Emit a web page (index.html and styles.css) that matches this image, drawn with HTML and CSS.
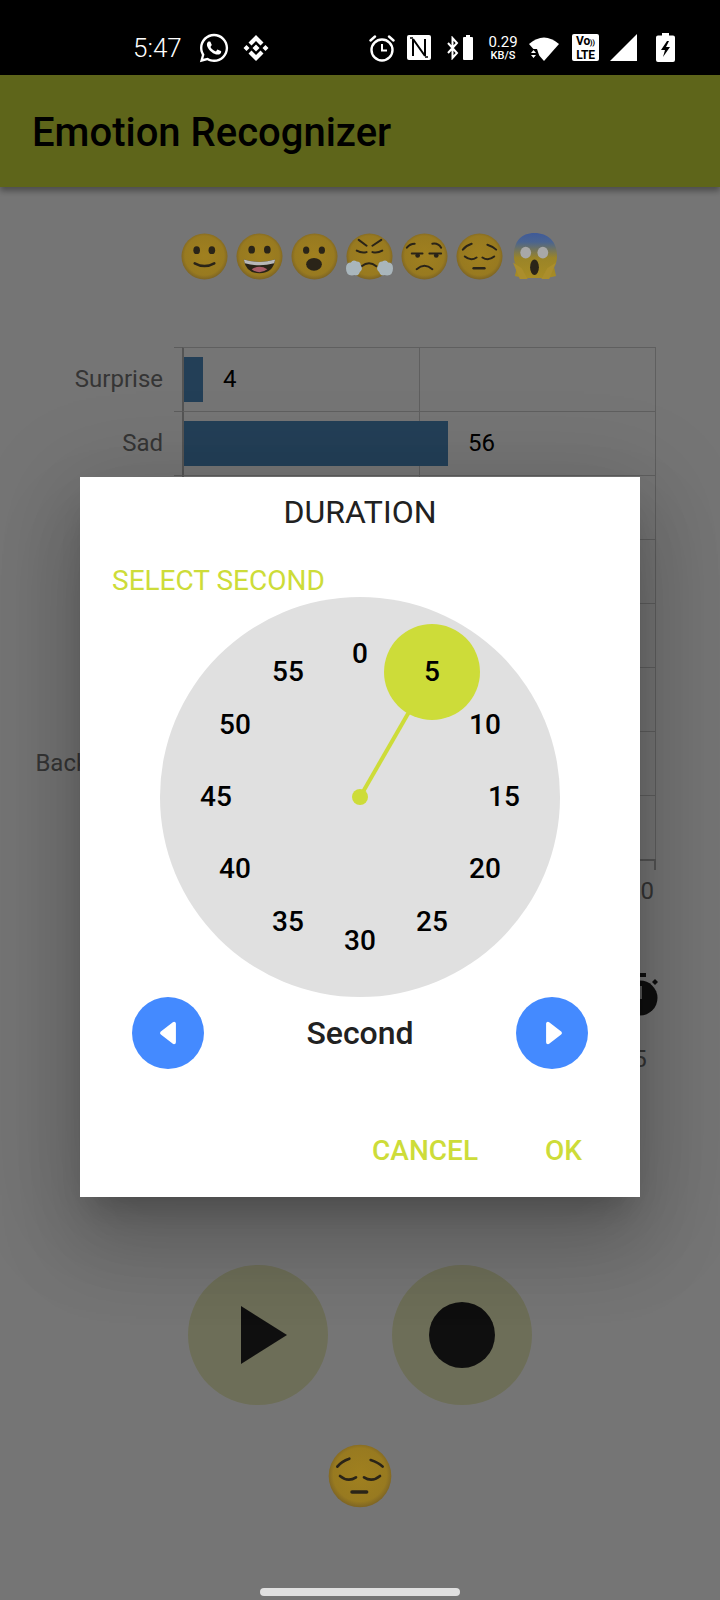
FILE: index.html
```html
<!DOCTYPE html>
<html lang="en">
<head>
<meta charset="utf-8">
<title>Emotion Recognizer</title>
<link rel="stylesheet" href="styles.css">
</head>
<body>
<svg class="defs" width="0" height="0" aria-hidden="true">
  <defs>
    <radialGradient id="skin" cx="50%" cy="48%" r="52%">
      <stop offset="0" stop-color="#a0801f"/>
      <stop offset="0.82" stop-color="#987a20"/>
      <stop offset="1" stop-color="#7d6424"/>
    </radialGradient>
    <linearGradient id="scared" x1="0" y1="0" x2="0" y2="1">
      <stop offset="0" stop-color="#3f5a98"/>
      <stop offset="0.2" stop-color="#4a6490"/>
      <stop offset="0.55" stop-color="#9a8428"/>
      <stop offset="1" stop-color="#a88c24"/>
    </linearGradient>
    <symbol id="e-smile" viewBox="0 0 48 48">
      <circle cx="24" cy="24" r="23.500" fill="url(#skin)"/>
      <ellipse cx="16" cy="17.500" rx="3.400" ry="4" fill="#2a2418"/><ellipse cx="31.500" cy="17.500" rx="3.400" ry="4" fill="#2a2418"/>
      <path d="M14 31q10 5.500 20 0" fill="none" stroke="#2a2418" stroke-width="2.600" stroke-linecap="round"/>
    </symbol>
    <symbol id="e-happy" viewBox="0 0 48 48">
      <circle cx="24" cy="24" r="23.500" fill="url(#skin)"/>
      <ellipse cx="16" cy="17" rx="3.400" ry="4" fill="#2a2418"/><ellipse cx="32" cy="17" rx="3.400" ry="4" fill="#2a2418"/>
      <path d="M8 27q16 5 32 0q-2 14-16 14t-16-14z" fill="#2a2418"/>
      <path d="M8 27q16 5 32 0l-1 4q-15 4-30 0z" fill="#b8b8b8"/>
      <path d="M16 37q8-5 16 0q-8 6-16 0z" fill="#a85c68"/>
    </symbol>
    <symbol id="e-wow" viewBox="0 0 48 48">
      <circle cx="24" cy="24" r="23.500" fill="url(#skin)"/>
      <ellipse cx="15.500" cy="17.500" rx="3.200" ry="3.800" fill="#2a2418"/><ellipse cx="31.500" cy="17.500" rx="3.200" ry="3.800" fill="#2a2418"/>
      <ellipse cx="23.500" cy="32" rx="8" ry="6.500" fill="#2a2418"/>
    </symbol>
    <symbol id="e-huff" viewBox="0 0 48 48">
      <circle cx="24" cy="24" r="23.500" fill="url(#skin)"/>
      <g fill="none" stroke="#2a2418" stroke-width="2" stroke-linecap="round">
        <path d="M13 7l8 6M36 7l-9 6M11 18q5 3 10 1.500M27 19.500q5 1.500 10-1.500M16 34q7.500-6 15 0"/>
      </g>
      <path d="M0 36q0-6 5-6q2-3 6-1q4 0 4 4q3 4-1 7q-1 4-5 3q-9 2-9-7zM48 36q0-6-5-6q-2-3-6-1q-4 0-4 4q-3 4 1 7q1 4 5 3q9 2 9-7z" fill="#a9b6bc"/>
    </symbol>
    <symbol id="e-unamused" viewBox="0 0 48 48">
      <circle cx="24" cy="24" r="23.500" fill="url(#skin)"/>
      <g fill="none" stroke="#2a2418" stroke-width="2" stroke-linecap="round">
        <path d="M6 15q3-4 8-4M32 11q6-1 9 4M11 21h11M29 21h12M16 37q8-7 16 0"/>
      </g>
      <circle cx="17" cy="23" r="2.400" fill="#2a2418"/><circle cx="36" cy="23" r="2.400" fill="#2a2418"/>
    </symbol>
    <symbol id="e-sad" viewBox="0 0 48 48">
      <circle cx="24" cy="24" r="23.500" fill="url(#skin)"/>
      <g fill="none" stroke="#2a2418" stroke-width="2" stroke-linecap="round">
        <path d="M7 17q3-4 9-6M41 17q-3-3-9-5M9 24q6 5 12 1M27 25q6 4 12-1"/>
      </g>
      <path d="M18 36h11" stroke="#2a2418" stroke-width="2.600" stroke-linecap="round"/>
    </symbol>
    <symbol id="e-fear" viewBox="0 0 48 48">
      <path d="M24 0c14 0 23 9 23 23c0 5-1 9-3 12l2 9l-9 2H13l-9-2l2-9c-2-3-3-7-3-12C3 9 10 0 24 0z" fill="url(#scared)"/>
      <ellipse cx="15" cy="20" rx="5.500" ry="6" fill="#a8a8a8"/><ellipse cx="32.500" cy="20" rx="5.500" ry="6" fill="#a8a8a8"/>
      <ellipse cx="24" cy="35" rx="4.500" ry="8" fill="#2a2418"/>
      <path d="M2 30l9 6l6 11H9zM46 30l-9 6l-6 11h8z" fill="#ab8e2c"/>
    </symbol>
  </defs>
</svg>

<div class="phone">
  <header class="status">
    <span class="time">5:47</span>
    <svg class="ic whatsapp" viewBox="0 0 24 24"><path fill="#fff" d="M12.04 2C6.58 2 2.13 6.45 2.13 11.91C2.13 13.66 2.59 15.36 3.45 16.86L2.05 22L7.3 20.62C8.75 21.41 10.38 21.83 12.04 21.83C17.5 21.83 21.95 17.38 21.95 11.92C21.95 9.27 20.92 6.78 19.05 4.91C17.18 3.03 14.69 2 12.04 2M12.05 3.67C14.25 3.67 16.31 4.53 17.87 6.09C19.42 7.65 20.28 9.72 20.28 11.92C20.28 16.46 16.58 20.15 12.04 20.15C10.56 20.15 9.11 19.76 7.85 19L7.55 18.83L4.43 19.65L5.26 16.61L5.06 16.29C4.24 15 3.8 13.47 3.8 11.91C3.81 7.37 7.5 3.67 12.05 3.67M8.53 7.33C8.37 7.33 8.1 7.39 7.87 7.64C7.65 7.89 7 8.5 7 9.71C7 10.93 7.89 12.1 8 12.27C8.14 12.44 9.76 14.94 12.25 16C12.84 16.27 13.3 16.42 13.66 16.53C14.25 16.72 14.79 16.69 15.22 16.63C15.7 16.56 16.68 16.03 16.89 15.45C17.1 14.87 17.1 14.38 17.04 14.27C16.97 14.17 16.81 14.11 16.56 14C16.31 13.86 15.09 13.26 14.87 13.18C14.64 13.1 14.5 13.06 14.31 13.3C14.15 13.55 13.67 14.11 13.53 14.27C13.38 14.44 13.24 14.46 13 14.34C12.74 14.21 11.94 13.95 11 13.11C10.26 12.45 9.77 11.64 9.62 11.39C9.5 11.15 9.61 11 9.73 10.89C9.84 10.78 10 10.6 10.1 10.45C10.23 10.31 10.27 10.2 10.35 10.04C10.43 9.87 10.39 9.73 10.33 9.61C10.27 9.5 9.77 8.26 9.56 7.77C9.36 7.29 9.16 7.35 9 7.34C8.86 7.34 8.7 7.33 8.53 7.33Z"/></svg>
    <svg class="ic binance" viewBox="0 0 26 28"><path fill="#fff" d="M13 10.500l3.500 3.500l-3.500 3.500l-3.500-3.500zM3.500 11l3 3l-3 3l-3-3zM22.500 11l3 3l-3 3l-3-3zM13 1l7.500 7.500l-3 3L13 7l-4.500 4.500l-3-3zM13 27l7.500-7.500l-3-3L13 21l-4.500-4.500l-3 3z"/></svg>
    <svg class="ic alarm" viewBox="0 0 26 28"><g fill="none" stroke="#fff" stroke-width="2.400"><circle cx="13" cy="16" r="10.500"/><path d="M13 10v6.500h5" stroke-width="2"/><path d="M1.500 6.500L6 2.500M24.500 6.500L20 2.500" stroke-linecap="round"/></g></svg>
    <svg class="ic nfc" viewBox="0 0 24 25"><rect width="24" height="25" rx="2" fill="#fff"/><path d="M6 4v17M6 4l12 17M18 4v17" fill="none" stroke="#000" stroke-width="2"/><path d="M3 3h3M18 22h3" stroke="#000" stroke-width="1.500"/></svg>
    <svg class="ic bt" viewBox="0 0 12 24"><path d="M1 7l9 10l-4.500 5V2l4.500 5L1 17" fill="none" stroke="#fff" stroke-width="2"/></svg>
    <svg class="ic bt-batt" viewBox="0 0 10 25"><path fill="#fff" d="M3 0h4v2h2a1 1 0 0 1 1 1v21a1 1 0 0 1-1 1H1a1 1 0 0 1-1-1V3a1 1 0 0 1 1-1h2z"/></svg>
    <span class="speed"><span class="speed-num">0.29</span><span class="speed-unit">KB/S</span></span>
    <svg class="ic wifi" viewBox="0 0 30 26"><path fill="#fff" d="M0 9Q15 -4 30 9L15 26Z"/><path fill="#000" d="M0 14h8l4 12H0z"/><path fill="#fff" d="M2 18l2.500-3l2.500 3zM2 20h5l-2.500 3z"/></svg>
    <span class="volte"><span>Vo<i class="volte-wave">&#41;&#41;</i></span><span>LTE</span></span>
    <svg class="ic signal" viewBox="0 0 27 27"><path fill="#fff" d="M27 0v27H0z"/></svg>
    <svg class="ic charge" viewBox="0 0 19 29"><path fill="#fff" d="M6 0h7v2.500h4a2 2 0 0 1 2 2V27a2 2 0 0 1-2 2H2a2 2 0 0 1-2-2V4.500a2 2 0 0 1 2-2h4z"/><path fill="#000" d="M11 8L5 17h4l-2 7l7-10h-4l3-6z"/></svg>
  </header>

  <div class="appbar"><h1 class="appbar-title">Emotion Recognizer</h1></div>

  <main class="main">
    <div class="emoji-row">
      <svg class="emoji"><use href="#e-smile"/></svg>
      <svg class="emoji"><use href="#e-happy"/></svg>
      <svg class="emoji"><use href="#e-wow"/></svg>
      <svg class="emoji"><use href="#e-huff"/></svg>
      <svg class="emoji"><use href="#e-unamused"/></svg>
      <svg class="emoji"><use href="#e-sad"/></svg>
      <svg class="emoji"><use href="#e-fear"/></svg>
    </div>

    <section class="chart">
      <div class="row"><span class="row-label">Surprise</span><span class="tick"></span><div class="cell"><span class="bar bar-surprise"></span><span class="val">4</span></div></div>
      <div class="row"><span class="row-label">Sad</span><span class="tick"></span><div class="cell"><span class="bar bar-sad"></span><span class="val">56</span></div></div>
      <div class="row"><span class="row-label"></span><span class="tick"></span><div class="cell"></div></div>
      <div class="row"><span class="row-label"></span><span class="tick"></span><div class="cell"></div></div>
      <div class="row"><span class="row-label"></span><span class="tick"></span><div class="cell"></div></div>
      <div class="row"><span class="row-label"></span><span class="tick"></span><div class="cell"></div></div>
      <div class="row"><span class="row-label">Background</span><span class="tick"></span><div class="cell"></div></div>
      <div class="row"><span class="row-label"></span><span class="tick"></span><div class="cell"></div></div>
      <div class="x-axis"><span class="x-label">100</span></div>
    </section>

    <div class="timer">
      <svg class="timer-icon" viewBox="0 0 42 46"><path fill="#222" d="M15 0h12v4H15z"/><circle cx="21" cy="25" r="17.500" fill="#222"/><path d="M33 9l3-3l3 3l-3 3z" fill="#222"/><path fill="#bbb" d="M19 13h4v13h-4z"/></svg>
      <span class="timer-val">5</span>
    </div>

    <div class="actions">
      <button class="round" type="button"><svg class="play" viewBox="0 0 46 58"><path fill="#222" d="M0 0l46 29L0 58z"/></svg></button>
      <button class="round" type="button"><span class="rec"></span></button>
    </div>

    <svg class="emoji emoji-big"><use href="#e-sad"/></svg>
  </main>

  <div class="scrim"></div>

  <div class="dialog">
    <h2 class="dlg-title">DURATION</h2>
    <div class="dlg-sub">SELECT SECOND</div>
    <div class="clock">
      <svg class="clock-art" viewBox="0 0 400 400">
        <line x1="200" y1="200" x2="272" y2="75" stroke="#cddc39" stroke-width="4"/>
        <circle cx="200" cy="200" r="8" fill="#cddc39"/>
        <circle cx="272" cy="75" r="48" fill="#cddc39"/>
      </svg>
      <span class="n n0">0</span><span class="n n5">5</span><span class="n n10">10</span><span class="n n15">15</span>
      <span class="n n20">20</span><span class="n n25">25</span><span class="n n30">30</span><span class="n n35">35</span>
      <span class="n n40">40</span><span class="n n45">45</span><span class="n n50">50</span><span class="n n55">55</span>
    </div>
    <div class="stepper">
      <button class="step" type="button"><svg class="arrow" viewBox="0 0 16 22"><path fill="#fff" stroke="#fff" stroke-width="3.500" stroke-linejoin="round" d="M13.500 2.500v17L2.500 11z"/></svg></button>
      <span class="step-label">Second</span>
      <button class="step" type="button"><svg class="arrow arrow-next" viewBox="0 0 16 22"><path fill="#fff" stroke="#fff" stroke-width="3.500" stroke-linejoin="round" d="M2.500 2.500v17L13.500 11z"/></svg></button>
    </div>
    <div class="dlg-actions">
      <span class="dlg-btn">CANCEL</span>
      <span class="dlg-btn">OK</span>
    </div>
  </div>

  <div class="home-indicator"></div>
</div>
</body>
</html>
```
FILE: styles.css
```css
* { box-sizing: border-box; }
html, body { margin: 0; padding: 0; }
body { background: #fff; font-family: Roboto, "Liberation Sans", sans-serif; }
.defs { position: absolute; }
.phone { position: relative; width: 720px; height: 1600px; overflow: hidden; background: #fff; display: flex; flex-direction: column; }

/* status bar */
.status { height: 75px; flex: none; background: #000; color: #fff; display: flex; align-items: center; padding: 20px 0 0 133px; position: relative; z-index: 3; }
.time { font-size: 26px; font-weight: 300; width: 48px; line-height: 30px; white-space: nowrap; }
.ic { display: block; flex: none; }
.whatsapp { width: 34px; height: 34px; margin: 0 0 0 16px; }
.binance { width: 26px; height: 28px; margin: 0 0 0 12px; }
.alarm { width: 26px; height: 28px; margin: 0 0 0 100px; }
.nfc { width: 24px; height: 25px; margin: 0 0 0 12px; }
.bt { width: 12px; height: 24px; margin: 0 0 0 16px; }
.bt-batt { width: 10px; height: 25px; margin: 0 0 0 4px; }
.speed { width: 34px; margin-left: 13px; display: flex; flex-direction: column; align-items: center; line-height: 1; }
.speed-num { font-size: 15px; height: 15px; }
.speed-unit { font-size: 11px; font-weight: 500; height: 11px; }
.wifi { width: 30px; height: 26px; margin: 0 0 0 9px; }
.volte { width: 27px; height: 27px; margin-left: 13px; background: #fff; color: #000; border-radius: 2px; display: flex; flex-direction: column; align-items: center; font-size: 12px; font-weight: 700; line-height: 13px; padding-top: 1px; letter-spacing: -.3px; }
.volte-wave { font-style: normal; font-size: 8px; }
.signal { width: 27px; height: 27px; margin: 0 0 0 11px; }
.charge { width: 19px; height: 29px; margin: -1px 0 0 19px; }

/* app bar */
.appbar { height: 112px; flex: none; background: #cddc39; display: flex; align-items: center; padding: 4px 0 0 32px; box-shadow: 0 4px 6px rgba(0,0,0,.35); position: relative; z-index: 1; }
.appbar-title { margin: 0; font-size: 40px; font-weight: 500; color: #000; line-height: 48px; }

/* page under the dialog */
.main { flex: 1; display: flex; flex-direction: column; }
.emoji-row { display: flex; justify-content: center; gap: 8px; margin-top: 46px; height: 47px; padding-left: 19px; }
.emoji { width: 47px; height: 47px; display: block; position: relative; z-index: 3; }

.chart { margin-top: 67px; }
.row { display: flex; height: 64px; }
.row-label { width: 163px; margin-right: 11px; flex: none; text-align: right; font-size: 24px; line-height: 64px; color: #757575; white-space: nowrap; }
.tick { width: 8px; flex: none; border-top: 1px solid #c8c8c8; }
.cell { width: 474px; flex: none; display: flex; align-items: center; border-top: 1px solid #d0d0d0; border-left: 2px solid #b8b8b8; border-right: 1px solid #d0d0d0; background: linear-gradient(#d0d0d0,#d0d0d0) 235px 0 / 1px 100% no-repeat; }
.bar { display: block; height: 45px; background: #4e89bd; }
.bar-surprise { width: 19px; }
.bar-sad { width: 264px; }
.val { margin: -2px 0 0 20px; font-size: 24px; color: #000; }
.x-axis { height: 44px; text-align: right; padding: 15px 2px 0 0; border-top: 2px solid #b8b8b8; margin: 0 64px 0 182px; background: linear-gradient(#b8b8b8,#b8b8b8) right 0 top 0 / 2px 9px no-repeat; }
.x-label { display: block; font-size: 24px; line-height: 30px; color: #757575; }

.timer { align-self: flex-end; width: 60px; margin: 70px 50px 0 0; display: flex; flex-direction: column; align-items: center; }
.timer-icon { width: 42px; height: 46px; display: block; }
.timer-val { font-size: 24px; line-height: 30px; margin-top: 25px; color: #757575; }

.actions { display: flex; justify-content: center; gap: 64px; margin-top: 191px; }
.round { width: 140px; height: 140px; border: 0; padding: 0; border-radius: 50%; background: #eef0bf; display: flex; align-items: center; justify-content: center; }
.play { width: 46px; height: 58px; margin-left: 12px; display: block; }
.rec { width: 66px; height: 66px; border-radius: 50%; background: #222; display: block; }
.emoji-big { width: 64px; height: 64px; align-self: center; margin-top: 39px; }

/* overlays */
.scrim { position: absolute; left: 0; right: 0; top: 75px; bottom: 0; background: rgba(0,0,0,.54); z-index: 2; }
.dialog { position: absolute; left: 80px; top: 477px; width: 560px; height: 720px; background: #fff; z-index: 3; display: flex; flex-direction: column; align-items: stretch; box-shadow: 0 48px 76px 6px rgba(0,0,0,.14), 0 18px 92px 16px rgba(0,0,0,.12), 0 22px 30px -14px rgba(0,0,0,.2); }
.dlg-title { margin: 16px 0 0; text-align: center; font-size: 32px; font-weight: 400; line-height: 38px; color: #212121; }
.dlg-sub { margin: 31px 0 0 32px; font-size: 28px; line-height: 38px; color: #cddc39; height: 35px; }
.clock { position: relative; align-self: center; width: 400px; height: 400px; border-radius: 50%; background: #e0e0e0; flex: none; }
.clock-art { position: absolute; inset: 0; width: 400px; height: 400px; }
.n { position: absolute; transform: translate(-50%, -50%); font-size: 28px; font-weight: 500; line-height: 34px; color: #000; }
.n0 { left: 200px; top: 57px; }
.n5 { left: 272px; top: 75px; }
.n10 { left: 325px; top: 128px; }
.n15 { left: 344px; top: 200px; }
.n20 { left: 325px; top: 272px; }
.n25 { left: 272px; top: 325px; }
.n30 { left: 200px; top: 344px; }
.n35 { left: 128px; top: 325px; }
.n40 { left: 75px; top: 272px; }
.n45 { left: 56px; top: 200px; }
.n50 { left: 75px; top: 128px; }
.n55 { left: 128px; top: 75px; }
.stepper { display: flex; align-items: center; justify-content: space-between; margin-top: 0; padding: 0 52px; height: 72px; }
.step { width: 72px; height: 72px; border: 0; padding: 0; border-radius: 50%; background: #448aff; display: flex; align-items: center; justify-content: center; }
.arrow { width: 18px; height: 24px; display: block; }
.arrow-next { margin-left: 3px; }
.step-label { font-size: 32px; font-weight: 500; color: #212121; line-height: 40px; }
.dlg-actions { display: flex; justify-content: flex-end; gap: 67px; margin-top: 65px; padding-right: 58px; }
.dlg-btn { font-size: 28px; font-weight: 500; line-height: 34px; color: #cddc39; }
.home-indicator { position: absolute; left: 260px; bottom: 4px; width: 200px; height: 8px; border-radius: 4px; background: #e0e0e0; z-index: 4; }
```
